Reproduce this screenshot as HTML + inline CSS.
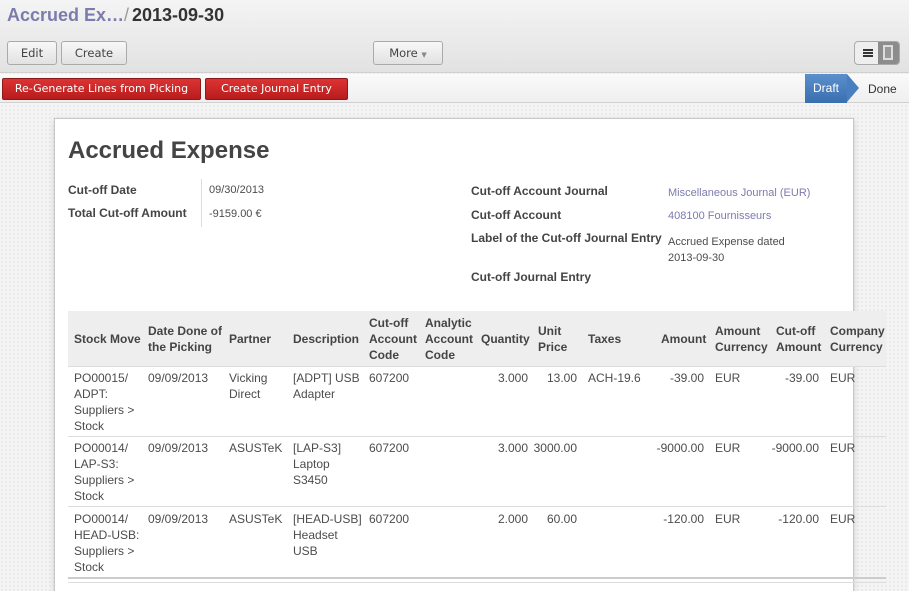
<!DOCTYPE html>
<html><head><meta charset="utf-8"><style>
*{margin:0;padding:0;box-sizing:border-box}
html{width:909px;height:591px;overflow:hidden}
body{width:909px;height:591px;overflow:hidden;font-family:Arial,Helvetica,"Liberation Sans",sans-serif;font-size:12px;color:#4c4c4c;position:relative;background:#f4f4f4;background-image:radial-gradient(#e6e6e6 1px,transparent 1px);background-size:4px 4px}
.a{position:absolute;white-space:nowrap}
.top{position:absolute;left:0;top:0;width:909px;height:73px;background:linear-gradient(#f4f4f4,#e2e2e2);border-bottom:1px solid #cfcfcf}
.btn{position:absolute;height:24px;border:1px solid #aaa;border-radius:3px;background:linear-gradient(#f8f8f8,#e2e2e2);font-family:"DejaVu Sans",sans-serif;font-size:11.5px;color:#444;text-align:center;line-height:22px}
.sb{position:absolute;left:0;top:74px;width:909px;height:29px;background:linear-gradient(#fafafa,#efefef);border-bottom:1px solid #d0d0d0}
.rb{position:absolute;top:78px;height:22px;border:1px solid #8b1a1a;border-radius:2px;background:linear-gradient(#dd3333,#b81c1c);color:#fff;font-family:"DejaVu Sans",sans-serif;font-size:11px;line-height:20px;text-align:center}
.sheet{position:absolute;left:54px;top:118px;width:800px;height:473px;background:#fff;border:1px solid #c8c8c8;border-bottom:none;box-shadow:0 2px 6px rgba(0,0,0,.15)}
.b{font-weight:bold;color:#444}
.thead{position:absolute;left:68px;top:311px;width:818px;height:55px;background:#eee}
.hl{position:absolute;left:68px;height:1px;width:818px;background:#ddd}
.c{position:absolute;line-height:16px;color:#4c4c4c;white-space:nowrap}
.h{position:absolute;line-height:16px;font-weight:bold;color:#444;white-space:nowrap}
.r{text-align:right}
.lnk{color:#7c7bad}
</style></head><body>
<div class="top"></div>
<div class="a" style="left:7px;top:5px;font-size:18px;font-weight:bold;color:#7c7bad">Accrued Ex…</div>
<div class="a" style="left:124px;top:5px;font-size:18px;color:#999">/</div>
<div class="a" style="left:132px;top:5px;font-size:18px;font-weight:bold;color:#333">2013-09-30</div>
<div class="btn" style="left:7px;top:41px;width:50px">Edit</div>
<div class="btn" style="left:61px;top:41px;width:66px">Create</div>
<div class="btn" style="left:373px;top:41px;width:70px">More <span style="font-size:7px;color:#888">▼</span></div>
<div class="a" style="left:854px;top:41px;width:46px;height:24px;border:1px solid #aaa;border-radius:4px;background:#eee;overflow:hidden">
<div style="position:absolute;left:8px;top:7px;width:10px;height:2px;background:#333;box-shadow:0 3px 0 #333,0 6px 0 #333"></div>
<div style="position:absolute;left:23px;top:0;width:23px;height:24px;background:#8c8c8c"></div>
<div style="position:absolute;left:28px;top:3px;width:10px;height:15px;border:2px solid #ddd;background:#999"></div>
</div>
<div class="sb"></div>
<div class="rb" style="left:2px;width:199px">Re-Generate Lines from Picking</div>
<div class="rb" style="left:205px;width:143px">Create Journal Entry</div>
<div class="a" style="left:805px;top:74px;width:42px;height:29px;background:linear-gradient(#5b8fcc,#3a6fb0);color:#fff;font-size:12px;line-height:29px;text-align:center">Draft</div>
<div class="a" style="left:847px;top:74px;width:0;height:0;border-top:14.5px solid transparent;border-bottom:14.5px solid transparent;border-left:12px solid #4a7fbf"></div>
<div class="a" style="left:868px;top:82px;color:#333">Done</div>
<div class="sheet"></div>
<div class="a" style="left:68px;top:137px;font-size:24px;font-weight:bold;color:#444">Accrued Expense</div>
<div class="a b" style="left:68px;top:183px">Cut-off Date</div>
<div class="a b" style="left:68px;top:206px">Total Cut-off Amount</div>
<div class="a" style="left:201px;top:179px;width:1px;height:48px;background:#ddd"></div>
<div class="a" style="left:209px;top:184px;font-size:11px">09/30/2013</div>
<div class="a" style="left:209px;top:208px;font-size:11px">-9159.00 €</div>
<div class="a b" style="left:471px;top:184px">Cut-off Account Journal</div>
<div class="a b" style="left:471px;top:208px">Cut-off Account</div>
<div class="a b" style="left:471px;top:231px">Label of the Cut-off Journal Entry</div>
<div class="a b" style="left:471px;top:270px">Cut-off Journal Entry</div>
<div class="a lnk" style="left:668px;top:187px;font-size:11px">Miscellaneous Journal (EUR)</div>
<div class="a lnk" style="left:668px;top:210px;font-size:11px">408100 Fournisseurs</div>
<div class="a" style="left:668px;top:234px;font-size:11px;line-height:16px">Accrued Expense dated<br>2013-09-30</div>
<div class="thead"></div>
<div class="h" style="left:74px;top:331px">Stock Move</div>
<div class="h" style="left:148px;top:323px">Date Done of<br>the Picking</div>
<div class="h" style="left:229px;top:331px">Partner</div>
<div class="h" style="left:293px;top:331px">Description</div>
<div class="h" style="left:369px;top:315px">Cut-off<br>Account<br>Code</div>
<div class="h" style="left:425px;top:315px">Analytic<br>Account<br>Code</div>
<div class="h" style="left:481px;top:331px">Quantity</div>
<div class="h" style="left:538px;top:323px">Unit<br>Price</div>
<div class="h" style="left:588px;top:331px">Taxes</div>
<div class="h" style="left:661px;top:331px">Amount</div>
<div class="h" style="left:715px;top:323px">Amount<br>Currency</div>
<div class="h" style="left:776px;top:323px">Cut-off<br>Amount</div>
<div class="h" style="left:830px;top:323px">Company<br>Currency</div>
<div class="hl" style="top:366px"></div>
<div class="hl" style="top:436px"></div>
<div class="hl" style="top:506px"></div>
<div class="hl" style="top:577px;height:2px;background:#ccc"></div>
<div class="hl" style="top:582px;background:#ddd"></div>

<div class="c" style="left:74px;top:370px">PO00015/<br>ADPT:<br>Suppliers &gt;<br>Stock</div>
<div class="c" style="left:148px;top:370px">09/09/2013</div>
<div class="c" style="left:229px;top:370px">Vicking<br>Direct</div>
<div class="c" style="left:293px;top:370px">[ADPT] USB<br>Adapter</div>
<div class="c" style="left:369px;top:370px">607200</div>
<div class="c r" style="left:481px;top:370px;width:47px">3.000</div>
<div class="c r" style="left:530px;top:370px;width:47px">13.00</div>
<div class="c" style="left:588px;top:370px">ACH-19.6</div>
<div class="c r" style="left:640px;top:370px;width:64px">-39.00</div>
<div class="c" style="left:715px;top:370px">EUR</div>
<div class="c r" style="left:760px;top:370px;width:59px">-39.00</div>
<div class="c" style="left:830px;top:370px">EUR</div>

<div class="c" style="left:74px;top:440px">PO00014/<br>LAP-S3:<br>Suppliers &gt;<br>Stock</div>
<div class="c" style="left:148px;top:440px">09/09/2013</div>
<div class="c" style="left:229px;top:440px">ASUSTeK</div>
<div class="c" style="left:293px;top:440px">[LAP-S3]<br>Laptop<br>S3450</div>
<div class="c" style="left:369px;top:440px">607200</div>
<div class="c r" style="left:481px;top:440px;width:47px">3.000</div>
<div class="c r" style="left:520px;top:440px;width:57px">3000.00</div>
<div class="c r" style="left:640px;top:440px;width:64px">-9000.00</div>
<div class="c" style="left:715px;top:440px">EUR</div>
<div class="c r" style="left:760px;top:440px;width:59px">-9000.00</div>
<div class="c" style="left:830px;top:440px">EUR</div>

<div class="c" style="left:74px;top:511px">PO00014/<br>HEAD-USB:<br>Suppliers &gt;<br>Stock</div>
<div class="c" style="left:148px;top:511px">09/09/2013</div>
<div class="c" style="left:229px;top:511px">ASUSTeK</div>
<div class="c" style="left:293px;top:511px">[HEAD-USB]<br>Headset<br>USB</div>
<div class="c" style="left:369px;top:511px">607200</div>
<div class="c r" style="left:481px;top:511px;width:47px">2.000</div>
<div class="c r" style="left:530px;top:511px;width:47px">60.00</div>
<div class="c r" style="left:640px;top:511px;width:64px">-120.00</div>
<div class="c" style="left:715px;top:511px">EUR</div>
<div class="c r" style="left:760px;top:511px;width:59px">-120.00</div>
<div class="c" style="left:830px;top:511px">EUR</div>
</body></html>
